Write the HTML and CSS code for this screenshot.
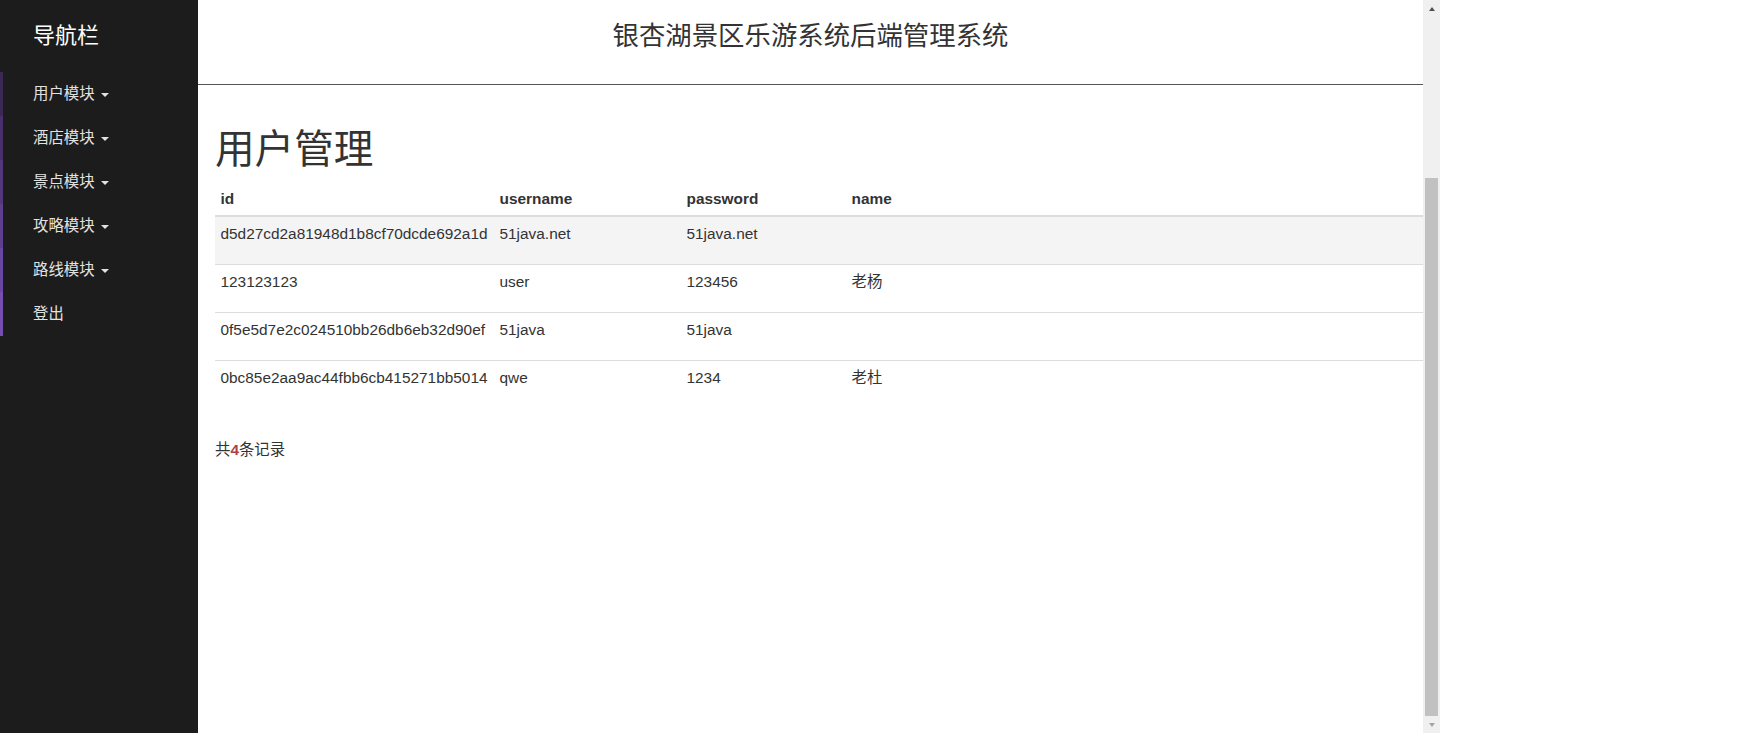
FILE: index.html
```html
<!DOCTYPE html>
<html lang="zh-CN">
<head>
<meta charset="utf-8">
<title>银杏湖景区乐游系统后端管理系统</title>
<link rel="stylesheet" href="styles.css">
</head>
<body>
<div class="page">
  <aside class="sidebar">
    <div class="brand">导航栏</div>
    <ul class="nav">
      <li class="nav-item c1">用户模块 <span class="caret"></span></li>
      <li class="nav-item c2">酒店模块 <span class="caret"></span></li>
      <li class="nav-item c3">景点模块 <span class="caret"></span></li>
      <li class="nav-item c4">攻略模块 <span class="caret"></span></li>
      <li class="nav-item c5">路线模块 <span class="caret"></span></li>
      <li class="nav-item c6">登出</li>
    </ul>
  </aside>
  <main class="main">
    <header class="topbar">
      <h2 class="site-title">银杏湖景区乐游系统后端管理系统</h2>
    </header>
    <section class="content">
      <h1 class="page-title">用户管理</h1>
      <table class="data-table">
        <thead>
          <tr>
            <th class="col-id">id</th>
            <th class="col-user">username</th>
            <th class="col-pass">password</th>
            <th class="col-name">name</th>
          </tr>
        </thead>
        <tbody>
          <tr class="hover">
            <td>d5d27cd2a81948d1b8cf70dcde692a1d</td>
            <td>51java.net</td>
            <td>51java.net</td>
            <td></td>
          </tr>
          <tr>
            <td>123123123</td>
            <td>user</td>
            <td>123456</td>
            <td>老杨</td>
          </tr>
          <tr>
            <td>0f5e5d7e2c024510bb26db6eb32d90ef</td>
            <td>51java</td>
            <td>51java</td>
            <td></td>
          </tr>
          <tr>
            <td>0bc85e2aa9ac44fbb6cb415271bb5014</td>
            <td>qwe</td>
            <td>1234</td>
            <td>老杜</td>
          </tr>
        </tbody>
      </table>
      <p class="total">共<b class="count">4</b>条记录</p>
    </section>
  </main>
  <div class="scrollbar">
    <div class="sb-btn"><span class="arrow-up"></span></div>
    <div class="sb-track"><div class="sb-thumb"></div></div>
    <div class="sb-btn"><span class="arrow-down"></span></div>
  </div>
  <div class="rest"></div>
</div>
</body>
</html>
```

FILE: styles.css
```css
* { box-sizing: border-box; }
html, body {
  margin: 0;
  padding: 0;
  height: 733px;
  overflow: hidden;
  background: #fff;
}
body {
  font-family: "Liberation Sans", "Noto Sans CJK SC", sans-serif;
  font-size: 15.4px;
  line-height: 22px;
  color: #333;
}
.page {
  display: flex;
  height: 733px;
}
.sidebar {
  width: 198px;
  flex: 0 0 198px;
  background: #1c1c1c;
}
.brand {
  height: 72px;
  padding: 22px 0 0 33px;
  font-size: 22px;
  line-height: 27px;
  color: #fff;
}
.nav {
  list-style: none;
  margin: 0;
  padding: 0;
}
.nav-item {
  height: 44px;
  padding: 11px 0 11px 30px;
  border-left: 3px solid #3b2a56;
  color: #e2e2e2;
  font-size: 15.4px;
  line-height: 22px;
}
.nav-item.c1 { border-left-color: #3a2955; }
.nav-item.c2 { border-left-color: #47306b; }
.nav-item.c3 { border-left-color: #52377c; }
.nav-item.c4 { border-left-color: #5e3f8e; }
.nav-item.c5 { border-left-color: #69469f; }
.nav-item.c6 { border-left-color: #754eb0; }
.caret {
  display: inline-block;
  width: 0;
  height: 0;
  margin-left: 2px;
  vertical-align: middle;
  border-top: 4.4px solid #e2e2e2;
  border-left: 4.4px solid transparent;
  border-right: 4.4px solid transparent;
}
.main {
  width: 1225px;
  flex: 0 0 1225px;
  background: #fff;
}
.topbar {
  height: 85px;
  padding-top: 22px;
  border-bottom: 1px solid #555;
}
.site-title {
  margin: 0;
  text-align: center;
  font-size: 26.4px;
  line-height: 29px;
  font-weight: 400;
  color: #333;
}
.content {
  padding: 20.5px 0 0 17px;
}
.page-title {
  margin: 22px 0 11px;
  font-size: 39.6px;
  line-height: 43.5px;
  font-weight: 400;
  color: #333;
}
.data-table {
  width: 100%;
  border-collapse: collapse;
  margin-bottom: 31px;
}
.data-table th {
  text-align: left;
  font-weight: 700;
  padding: 5.5px;
  line-height: 22px;
  border-bottom: 2px solid #ddd;
}
.data-table td {
  padding: 5.5px 5.5px 19.5px;
  line-height: 22px;
  border-top: 1px solid #ddd;
  vertical-align: top;
}
.data-table tbody tr:first-child td { border-top: 0; }
.data-table tr.hover td { background: #f4f4f4; }
.col-id { width: 279px; }
.col-user { width: 187px; }
.col-pass { width: 165px; }
.total {
  margin: 0;
}
.count {
  color: #a94442;
}
.scrollbar {
  width: 17px;
  flex: 0 0 17px;
  background: #f0f0f0;
  display: flex;
  flex-direction: column;
}
.sb-btn {
  height: 17px;
  display: flex;
  align-items: center;
  justify-content: center;
}
.arrow-up {
  width: 0; height: 0;
  border-left: 3.5px solid transparent;
  border-right: 3.5px solid transparent;
  border-bottom: 4px solid #505050;
}
.arrow-down {
  width: 0; height: 0;
  border-left: 3.5px solid transparent;
  border-right: 3.5px solid transparent;
  border-top: 4px solid #a3a3a3;
}
.sb-track {
  flex: 1;
  padding: 161px 2px 0;
}
.sb-thumb {
  height: 538px;
  background: #c1c1c1;
}
.rest {
  flex: 1;
  background: #fff;
}
```
